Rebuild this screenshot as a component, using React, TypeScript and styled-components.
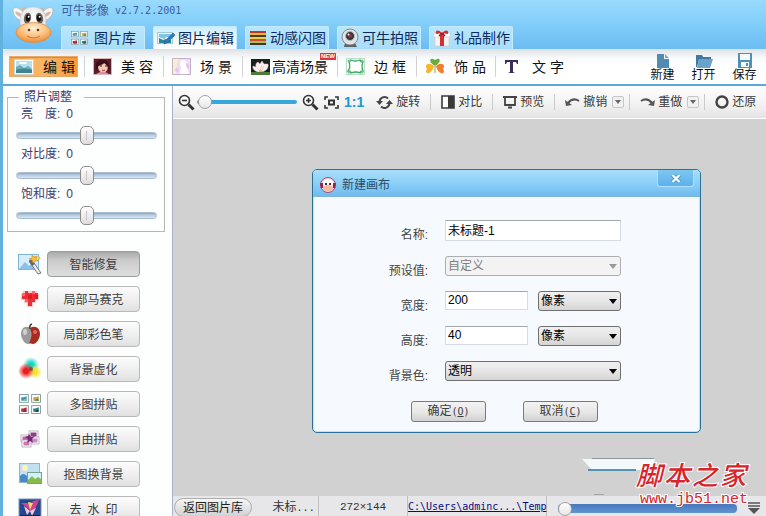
import React, { useState } from "react";
import styled, { createGlobalStyle, css } from "styled-components";

const cjk = `"Liberation Sans", "Noto Sans CJK SC", sans-serif`;
const mono = `"DejaVu Sans Mono", "Noto Sans CJK SC", monospace`;

const GlobalStyle = createGlobalStyle`
  * { box-sizing: border-box; }
  body { margin: 0; font: 12px/16px ${cjk}; color: #333; overflow: hidden; }
  button, input, select { font: inherit; color: inherit; margin: 0; }
`;

const Shell = styled.div`
  height: 100vh;
  display: flex;
  flex-direction: column;
  position: relative;
  overflow: hidden;
  border-left: 3px solid #62b1de;
`;

/* ---------- header ---------- */

const Header = styled.header`
  flex: none;
  height: 49px;
  display: flex;
  gap: 6px;
  padding-left: 9px;
  background: linear-gradient(#99dafd, #81cdf9 50%, #6abcf2);
`;

const Brand = styled.div`
  width: 43px;
  padding-top: 4px;
  flex: none;
`;

const HeaderMain = styled.div`
  flex: 1;
  display: flex;
  flex-direction: column;
  justify-content: space-between;
`;

const AppTitle = styled.h1`
  margin: 0;
  padding-top: 3px;
  font: 12px/16px ${cjk};
  color: #3f5ca0;
  display: flex;
  gap: 6px;
`;

const Latin = styled.span`
  font-family: ${mono};
  font-size: 10px;
`;

const Tabs = styled.nav`
  display: flex;
  gap: 8px;
`;

const Tab = styled.button<{ $active?: boolean }>`
  width: 84px;
  height: 23px;
  padding: 0 0 0 3px;
  display: flex;
  align-items: center;
  gap: 3px;
  border: 1px solid #c4eafc;
  border-bottom: 0;
  border-radius: 2px 2px 0 0;
  background: ${(p) =>
    p.$active ? "linear-gradient(#c9eefd, #f0faff 60%, #fff)" : "linear-gradient(#b9e6fd, #a8ddfa)"};
  font-size: 14px;
  white-space: nowrap;
  color: #0d2a5c;
`;

const TabIcon = styled.span<{ $wide?: boolean }>`
  width: ${(p) => (p.$wide ? 26 : 18)}px;
  padding-left: ${(p) => (p.$wide ? 6 : 0)}px;
  display: flex;
`;

/* ---------- ribbon ---------- */

const Ribbon = styled.div`
  flex: none;
  height: 37px;
  display: flex;
  justify-content: space-between;
  padding-left: 3px;
  background: linear-gradient(#dde0e4, #f8f9fa 25%, #fff 45%, #fff);
  border-bottom: 2px solid #5aa9da;
  border-radius: 3px 0 0 0;
`;

const RibbonItems = styled.div`
  display: flex;
  align-items: center;
`;

const RibbonSlot = styled.div<{ $wide?: boolean; $last?: boolean }>`
  width: ${(p) => (p.$wide ? 95 : 79)}px;
  height: 21px;
  padding: 0 6px 0 3px;
  position: relative;
  border-right: ${(p) => (p.$last ? "0" : "1px solid #d2d2d6")};
`;

const RibbonButton = styled.button<{ $active?: boolean; $tight?: boolean }>`
  width: 100%;
  height: 21px;
  padding: 0 0 0 5px;
  display: flex;
  align-items: center;
  gap: ${(p) => (p.$tight ? 2 : 9)}px;
  border: 0;
  background: none;
  font-size: 14px;
  white-space: nowrap;
  color: #111;
  ${(p) =>
    p.$active &&
    css`
      background: linear-gradient(90deg, #f8a94e, #fbb765 50%, #f49a38);
      box-shadow: inset 0 0 0 1px #e8a869, inset 0 2px 1px #c88a4c;
    `}
`;

const NewBadge = styled.span`
  position: absolute;
  top: -3px;
  right: 1px;
  padding: 0 1px;
  font: bold 6px/7px ${cjk};
  color: #fff;
  background: #d9373f;
`;

const FileActions = styled.div`
  display: flex;
  padding: 4px 1px 0 0;
`;

const FileAction = styled.button`
  width: 41px;
  padding: 0;
  border: 0;
  background: none;
  display: flex;
  flex-direction: column;
  align-items: center;
  line-height: 14px;
  color: #111;
`;

/* ---------- body ---------- */

const Body = styled.div`
  flex: 1;
  min-height: 0;
  display: flex;
`;

const Sidebar = styled.aside`
  flex: none;
  width: 170px;
  overflow: hidden;
  border-right: 1px solid #a9afc4;
  background: #fdfefe;
`;

const AdjustGroup = styled.fieldset`
  margin: 3px 7px 0 4px;
  padding: 1px 7px 5px 8px;
  border: 1px solid #b3b9b0;
  color: #3c3c6e;
`;

const Legend = styled.legend`
  margin-left: 3px;
  padding: 0 12px 0 5px;
  line-height: 16px;
`;

const Adjust = styled.label`
  display: block;
  height: 40px;
`;

const AdjustName = styled.span`
  display: flex;
  gap: 6px;
  padding-left: 5px;
  line-height: 16px;
`;

const AdjustRange = styled.input`
  appearance: none;
  display: block;
  width: 100%;
  height: 20px;
  margin: 3px 0 0;
  background: none;
  &::-webkit-slider-runnable-track {
    height: 7px;
    border: 1px solid #a9bccd;
    border-radius: 4px;
    background: linear-gradient(#93a9bf, #bccfe4 50%, #d6e4f4);
  }
  &::-webkit-slider-thumb {
    appearance: none;
    width: 14px;
    height: 19px;
    margin-top: -7px;
    border: 1px solid #8c8c8c;
    border-radius: 5px;
    background: linear-gradient(90deg, transparent 5px, #c3c3c3 5px, #c3c3c3 6px, transparent 6px) center / 12px 9px
        no-repeat,
      linear-gradient(#fff, #dcdcdc);
  }
`;

const ToolList = styled.ul`
  list-style: none;
  margin: 19px 0 0;
  padding: 0 0 0 15px;
  display: flex;
  flex-direction: column;
  gap: 9px;
`;

const ToolRow = styled.li`
  display: flex;
  align-items: center;
  gap: 5px;
`;

const ToolIcon = styled.span`
  width: 24px;
  height: 26px;
  display: grid;
  place-items: center;
  flex: none;
`;

const ToolButton = styled.button<{ $active?: boolean }>`
  width: 93px;
  height: 26px;
  padding: 2px 0 0;
  border: 1px solid #b9b9b9;
  border-radius: 4px;
  color: #3d3d3d;
  background: linear-gradient(#fcfcfc, #ededed 60%, #e0e0e0);
  ${(p) =>
    p.$active &&
    css`
      border-color: #9c9c9c;
      background: linear-gradient(#a9a9a9, #cbcbcb 35%, #dedede);
    `}
`;

const Workspace = styled.main`
  flex: 1;
  min-width: 0;
  display: flex;
  flex-direction: column;
`;

const CanvasBar = styled.div`
  flex: none;
  height: 33px;
  display: flex;
  align-items: center;
  gap: 10px;
  padding: 0 5px;
  border-bottom: 1px solid #fff;
  box-shadow: 0 1px 0 #bfbfbf;
  background: linear-gradient(#fdfdfd, #f4f4f4 50%, #e4e4e4);
`;

const ZoomGroup = styled.div`
  display: flex;
  align-items: center;
  margin-right: 2px;
`;

const PlainButton = styled.button`
  padding: 0;
  border: 0;
  background: none;
  display: flex;
  align-items: center;
  gap: 3px;
  white-space: nowrap;
  color: #3a3a3a;
`;

const FitButton = styled(PlainButton)`
  margin: 0 5px;
`;

const ActualSize = styled(PlainButton)`
  font-weight: bold;
  font-size: 14px;
  color: #2196d2;
`;

const Divider = styled.span`
  width: 1px;
  height: 16px;
  background: #cacaca;
`;

const SplitTool = styled.div`
  display: flex;
  align-items: center;
  gap: 5px;
  margin-right: -5px;
`;

const DropButton = styled.button`
  width: 12px;
  height: 12px;
  padding: 0;
  display: grid;
  place-items: center;
  border: 1px solid #c6c6c6;
  border-radius: 2px;
  background: #f1f1f1;
`;

const LineRange = styled.input<{ $thick?: boolean }>`
  appearance: none;
  width: ${(p) => (p.$thick ? 179 : 100)}px;
  height: 16px;
  margin: 0 ${(p) => (p.$thick ? 0 : 5)}px 0 ${(p) => (p.$thick ? 0 : 2)}px;
  background: none;
  &::-webkit-slider-runnable-track {
    height: ${(p) => (p.$thick ? 9 : 4)}px;
    border-radius: 4px;
    background: ${(p) => (p.$thick ? "linear-gradient(#4a78bb, #5f94d4)" : "#38a8dc")};
  }
  &::-webkit-slider-thumb {
    appearance: none;
    width: 14px;
    height: 14px;
    margin-top: ${(p) => (p.$thick ? -2 : -5)}px;
    border: 1px solid #a2a2a2;
    border-radius: 50%;
    background: linear-gradient(#fff, #e6e6e6);
  }
`;

const Canvas = styled.div`
  flex: 1;
  background: #d1d1d1;
`;

const StatusBar = styled.footer`
  flex: none;
  height: 20px;
  display: flex;
  align-items: stretch;
  background: #e7e7e9;
  padding-right: 6px;
`;

const BackButton = styled.button`
  width: 78px;
  height: 19px;
  margin: 2px 0 0 1px;
  padding: 0;
  border: 1px solid #adadad;
  border-radius: 10px;
  background: linear-gradient(#f6f6f6, #d2d2d2);
  line-height: 16px;
  color: #222;
`;

const StatusCell = styled.span<{ $w: number }>`
  width: ${(p) => p.$w}px;
  padding-top: 2px;
  line-height: 18px;
  border-right: 1px solid #bfbfc4;
  text-align: right;
  white-space: nowrap;
`;

const SizeCell = styled(StatusCell)`
  padding-top: 3px;
  text-align: center;
  font: 11px/16px "Liberation Mono", monospace;
  border-right-color: #b9bbdc;
`;

const PathLink = styled.a`
  padding-top: 3px;
  font: 10px/16px ${mono};
  color: #0a0a80;
  border-right: 1px solid #bfbfc4;
`;

const StatusZoom = styled.div`
  flex: 1;
  display: flex;
  align-items: center;
  justify-content: space-between;
  padding: 4px 0 0 11px;
`;

/* ---------- dialog ---------- */

const Dialog = styled.section`
  position: absolute;
  left: 309px;
  top: 169px;
  width: 389px;
  border: 1px solid #2a7197;
  border-radius: 5px;
  overflow: hidden;
  background: #f6fafe;
  box-shadow: inset 0 0 0 1px #aeeafa;
`;

const DialogTitle = styled.div`
  height: 27px;
  display: flex;
  align-items: center;
  padding: 4px 6px 0 7px;
  gap: 6px;
  background: linear-gradient(#a9def9, #8ccff8 50%, #6fbcf0);
  border-bottom: 1px solid #7fb4d8;
  color: #2c4a66;
`;

const DialogHeading = styled.h2`
  flex: 1;
  margin: 0;
  font: 12px/16px ${cjk};
`;

const CloseButton = styled.button`
  align-self: flex-start;
  width: 37px;
  height: 17px;
  margin-top: -4px;
  padding: 0;
  display: grid;
  place-items: center;
  border: 1px solid #aee0fb;
  border-top: 0;
  border-radius: 0 0 3px 3px;
  background: linear-gradient(#7cc6f1, #5cb2ec);
`;

const Form = styled.form`
  padding: 23px 79px 10px 0;
  display: flex;
  flex-direction: column;
  gap: 15px;
`;

const Field = styled.div`
  display: grid;
  grid-template-columns: 115px 1fr;
  column-gap: 17px;
`;

const FieldLabel = styled.label`
  padding-top: 7px;
  height: 20px;
  line-height: 16px;
  text-align: right;
  color: #444;
`;

const Controls = styled.div`
  display: grid;
  grid-auto-flow: column;
  grid-auto-columns: 1fr;
  gap: 10px;
  color: #000;
`;

const TextBox = styled.input<{ $tall?: boolean }>`
  width: 100%;
  height: ${(p) => (p.$tall ? 21 : 19)}px;
  padding: 0 2px 2px;
  border: 1px solid #d4dbe2;
  border-top-color: #a3a8af;
  background: #fff;
`;

const SelectWrap = styled.div`
  position: relative;
  display: grid;
  align-items: center;
  height: 20px;
`;

const Select = styled.select`
  appearance: none;
  width: 100%;
  height: 20px;
  padding: 0 16px 1px 2px;
  border: 1px solid #6f6f6f;
  border-radius: 3px;
  background: linear-gradient(#f0f0f0, #e6e6e6 50%, #d4d4d4);
  &:disabled {
    opacity: 1;
    color: #7e7e7e;
    border-color: #aaaeb2;
    background: #f3f3f3;
  }
`;

const Caret = styled.svg`
  position: absolute;
  right: 4px;
  pointer-events: none;
`;

const DialogActions = styled.div`
  display: flex;
  gap: 37px;
  padding: 5px 0 0 98px;
`;

const DialogButton = styled.button`
  width: 75px;
  height: 21px;
  padding: 0;
  border: 1px solid #7a7a7a;
  border-radius: 3px;
  background: linear-gradient(#f3f3f3, #e8e8e8 50%, #d2d2d2);
  color: #3c3c3c;
`;

/* ---------- site mark ---------- */

const GhostPanel = styled.svg`
  position: absolute;
  right: 66px;
  bottom: 16px;
`;

const SiteMark = styled.div`
  position: absolute;
  right: 18px;
  bottom: 8px;
  color: #d6262b;
  paint-order: stroke fill;
  -webkit-text-stroke: 2px #fff;
`;

const SiteName = styled.div`
  display: flex;
  gap: 2px;
  margin: 0 0 0 -4px;
  font: italic 500 26px/30px "Liberation Sans", "Noto Sans CJK SC", sans-serif;
`;

const SiteUrl = styled.div`
  font: 15px/17px "Liberation Mono", monospace;
`;

/* ---------- drawings ---------- */

const Cow = () => (
  <svg width="42" height="40" viewBox="0 0 42 40">
    <defs>
      <radialGradient id="muzzle" cx=".5" cy=".3" r=".7">
        <stop offset="0" stopColor="#fff0d8" />
        <stop offset=".5" stopColor="#fcc586" />
        <stop offset="1" stopColor="#ee8c33" />
      </radialGradient>
      <radialGradient id="face" cx=".5" cy=".4" r=".7">
        <stop offset="0" stopColor="#fff" />
        <stop offset="1" stopColor="#d9dcdf" />
      </radialGradient>
    </defs>
    <path d="M12 9C9 7 9 4 13 3c0 3 2 4 5 5zM30 9c3-2 3-5-1-6 0 3-2 4-5 5z" fill="#d9b48c" />
    <path d="M11 8C6 2 1 3 1 6c0 6 5 11 10 10zM31 8c5-6 10-5 10-2 0 6-5 11-10 10z" fill="#f6f6f6" stroke="#b5aaa5" strokeWidth=".7" />
    <path d="M9 10C6 7 3 8 3 8c1 3 4 5 7 5zM33 10c3-3 6-2 6-2-1 3-4 5-7 5z" fill="#dcb5aa" />
    <path d="M21 3c9 0 13 6 13 14 0 9-5 15-13 15S8 26 8 17C8 9 12 3 21 3z" fill="url(#face)" stroke="#c5c5c5" strokeWidth=".6" />
    <ellipse cx="15.500" cy="14" rx="3.500" ry="5.500" fill="#6e5f58" transform="rotate(12 15 14)" />
    <ellipse cx="27.500" cy="14" rx="3.500" ry="5.500" fill="#6e5f58" transform="rotate(-12 28 14)" />
    <ellipse cx="16" cy="14" rx="2.200" ry="3.500" fill="#111" />
    <ellipse cx="27" cy="14" rx="2.200" ry="3.500" fill="#111" />
    <circle cx="16.700" cy="12.800" r="1" fill="#fff" />
    <circle cx="27.700" cy="12.800" r="1" fill="#fff" />
    <ellipse cx="21.500" cy="28.500" rx="17.500" ry="10" fill="url(#muzzle)" stroke="#dc8637" strokeWidth=".7" />
    <circle cx="17" cy="26" r="1.300" fill="#6a3c16" />
    <circle cx="26" cy="26" r="1.300" fill="#6a3c16" />
    <path d="M15 32q7 4 13 0" fill="none" stroke="#b8682b" strokeWidth=".8" />
  </svg>
);

const Thumbs = ({ large }: { large?: boolean }) => (
  <svg width={large ? 22 : 17} height={large ? 20 : 14} viewBox="0 0 20 18" preserveAspectRatio="none">
    {[
      { x: 0, y: 0, a: "#3e9aa8", b: "#7fc5a0" },
      { x: 11, y: 0, a: "#c5a24a", b: "#4b7c54" },
      { x: 0, y: 10, a: "#b42e35", b: "#732a45" },
      { x: 11, y: 10, a: "#357b77", b: "#213a6e" },
    ].map((t) => (
      <g key={t.a} transform={`translate(${t.x} ${t.y})`}>
        <rect x=".5" y=".5" width="8" height="7" fill="#fff" stroke="#7d9595" strokeWidth=".8" />
        <path d="M2 6V3l2 0 3-1v4z" fill={t.a} />
        <path d="M3 6l3-2 1 2z" fill={t.b} />
      </g>
    ))}
  </svg>
);

const PhotoEdit = () => (
  <svg width="18" height="14" viewBox="0 0 18 14">
    <rect x=".5" y="1.500" width="15" height="11" fill="#eaf7ff" stroke="#a5c7d6" />
    <path d="M2 3h12v4l-4-1-3 2-5-2z" fill="#7cc7e8" />
    <path d="M2 7l4 2 3-1 5 1v3H2z" fill="#2c8590" />
    <path d="M7 13l1-3 8-8 2 2-8 8z" fill="#2f79c3" stroke="#174f8f" strokeWidth=".5" />
  </svg>
);

const Stripes = () => (
  <svg width="18" height="14" viewBox="0 0 18 14">
    {["#b33a2c", "#e3b53b", "#4f3a2a", "#e6d14a", "#cf4a38", "#a9c04c", "#42352c"].map((c, i) => (
      <rect key={c} x="1" y={i * 2} width="16" height="2" fill={c} />
    ))}
  </svg>
);

const Webcam = () => (
  <svg width="18" height="20" viewBox="0 0 18 20">
    <path d="M4 15h10l2 4H3z" fill="#5d6266" />
    <circle cx="9" cy="9" r="8" fill="#e2e4e6" stroke="#85898d" />
    <circle cx="9" cy="8" r="4.500" fill="#34383c" stroke="#b8bcc0" />
    <circle cx="9" cy="8" r="2" fill="#8f3540" />
    <circle cx="7.500" cy="6.500" r="1" fill="#fff" />
  </svg>
);

const Gift = () => (
  <svg width="18" height="18" viewBox="0 0 18 18">
    <path d="M2 7h14v10H2z" fill="#f7f4f2" stroke="#d7c6c2" strokeWidth=".6" />
    <path d="M1 4h16v4H1z" fill="#fff" stroke="#d9c5c2" strokeWidth=".6" />
    <path d="M7 4h4v13H7z" fill="#d22f2f" />
    <path d="M9 4C5 0 2 1 3 5zM9 4c4-4 7-3 6 1z" fill="#d22f2f" />
    <path d="M9 4L6 7M9 4l3 3" stroke="#a81a20" strokeWidth="1.500" />
  </svg>
);

const Landscape = () => (
  <svg width="20" height="16" viewBox="0 0 20 16">
    <rect x=".5" y=".5" width="19" height="15" fill="#fff" stroke="#cdd5cc" />
    <rect x="2" y="2" width="16" height="12" fill="#b5e0ee" />
    <path d="M2 8l4-2 4 3 4-2 4 3v3H2z" fill="#6fabb5" />
    <path d="M2 11q8-3 16 0v3H2z" fill="#3f8496" />
    <ellipse cx="9" cy="4" rx="4" ry="1" fill="#fff" />
  </svg>
);

const Portrait = () => (
  <svg width="19" height="17" viewBox="0 0 19 17">
    <rect x=".5" y=".5" width="18" height="16" fill="#5b1e2c" stroke="#d9b7b7" />
    <path d="M5 8c0-7 10-7 10 0 0 9-10 9-10 0z" fill="#f5c9b8" />
    <path d="M3 13C1 2 8 1 11 2c5 0 6 7 5 11-1-4-2-6-5-8-1 2-5 2-6 4z" fill="#3a1018" />
    <path d="M7 8h2M12 8h2" stroke="#321" />
    <path d="M9 12q1 1 3 0" stroke="#c42534" fill="none" />
    <path d="M3 16q7-5 13 0z" fill="#d990a0" />
  </svg>
);

const Scene = () => (
  <svg width="19" height="17" viewBox="0 0 19 17">
    <rect x=".5" y=".5" width="18" height="16" fill="#f0dcf4" stroke="#c4b3cb" />
    <path d="M1 1h6L4 9v7H1z" fill="#f7f0c8" />
    <path d="M11 2c4 0 6 4 4 7l2 7H8l1-7C7 6 8 2 11 2z" fill="#fff" />
    <path d="M14 4l3 3v5l-3-4z" fill="#e7c3ea" />
    <circle cx="5" cy="12" r="2" fill="#e8c6ef" />
  </svg>
);

const Lotus = () => (
  <svg width="19" height="16" viewBox="0 0 19 16">
    <rect width="19" height="16" fill="#17221a" />
    <path d="M9 13C3 13 1 9 2 7l3 1C4 5 6 3 7 3l2 2 2-3 2 3 4 0c1 4-2 8-8 8z" fill="#fbeff3" stroke="#d7a7bc" strokeWidth=".5" />
    <path d="M6 9l3 3 2-6M13 7l-3 6" stroke="#dcb6c4" strokeWidth=".6" fill="none" />
    <path d="M0 13h19v3H0z" fill="#4a7c3a" />
    <path d="M8 11h3v2H8z" fill="#e2c447" />
  </svg>
);

const Frame = () => (
  <svg width="19" height="17" viewBox="0 0 19 17">
    <rect x=".5" y=".5" width="18" height="16" fill="#fff" stroke="#b7dfc1" />
    <path d="M3 4q2-1 2-2 4 2 9 0 0 2 3 2-2 4 0 9-3 0-3 2-4-2-9 0 0-2-3-2 3-4 1-9z" fill="none" stroke="#3aa665" strokeWidth="1.300" />
    <g fill="#6cc28a">
      <circle cx="3" cy="3" r="1.500" />
      <circle cx="16" cy="3" r="1.500" />
      <circle cx="3" cy="14" r="1.500" />
      <circle cx="16" cy="14" r="1.500" />
    </g>
  </svg>
);

const Clover = () => (
  <svg width="20" height="17" viewBox="0 0 20 17">
    <path d="M10 8C4 5 4 0 8 1l2 1 2-1c4-1 4 4-2 7z" fill="#69ae3d" />
    <path d="M9 8C5 4 0 6 1 9l1 2-1 2c0 4 6 3 8-5z" fill="#f5b52e" />
    <path d="M11 8c4-4 9-2 8 1l-1 2 1 2c0 4-6 3-8-5z" fill="#f07f2b" />
    <path d="M10 8v7" stroke="#8ca637" />
  </svg>
);

const LetterT = () => (
  <svg width="19" height="15" viewBox="0 0 19 15">
    <path d="M1 1h13v4h-1l-1-2H9v10l2 1H4l2-1V3H3L2 5H1z" fill="#3b2b60" />
  </svg>
);

const NewFile = () => (
  <svg width="14" height="15" viewBox="0 0 14 15">
    <path d="M1 1h7v5h5v9H1z" fill="#4f8bb3" />
    <path d="M9 1l4 4H9z" fill="#76a9ca" />
  </svg>
);

const OpenFolder = () => (
  <svg width="18" height="15" viewBox="0 0 18 15">
    <path d="M1 2h6l1 2h8v3H4L2 14H1z" fill="#3f7aa4" />
    <path d="M4 6h14l-3 9H2z" fill="#6ba3c8" />
  </svg>
);

const Floppy = () => (
  <svg width="16" height="15" viewBox="0 0 16 15">
    <path d="M1 0h14v15H1z" fill="#4f8fb8" />
    <path d="M3 1h10v6H3zM4 9h8v5H4z" fill="#f4f9fb" />
    <path d="M9 10h2v3H9z" fill="#4f8fb8" />
  </svg>
);

const Magnifier = ({ plus }: { plus?: boolean }) => (
  <svg width="17" height="17" viewBox="0 0 17 17" fill="none" stroke="#333">
    <circle cx="6.500" cy="6.500" r="5" strokeWidth="1.600" fill="#fafafa" />
    <path d="M10.500 10.500l5 5" strokeWidth="3" />
    <path d={plus ? "M4 6.500h5M6.500 4v5" : "M4 6.500h5"} strokeWidth="1.600" />
  </svg>
);

const Fit = () => (
  <svg width="15" height="13" viewBox="0 0 15 13" fill="none" stroke="#333" strokeWidth="1.600">
    <path d="M1 4V1h3M11 1h3v3M14 9v3h-3M4 12H1V9" />
    <path d="M5 4.500h5v4H5z" strokeWidth="2" />
  </svg>
);

const Rotate = () => (
  <svg width="17" height="15" viewBox="0 0 17 15">
    <path d="M3.500 7A5 5 0 0 1 12 3.500M13.500 8A5 5 0 0 1 5 11.500" fill="none" stroke="#444" strokeWidth="2" />
    <path d="M0 6h7l-3.500 4zM17 9h-7l3.500-4z" fill="#444" />
  </svg>
);

const Contrast = () => (
  <svg width="14" height="14" viewBox="0 0 14 14">
    <path d="M1 1h12v12H1z" fill="#fff" stroke="#3a3a3a" strokeWidth="1.600" />
    <path d="M7 1h6v12H7z" fill="#3a3a3a" />
  </svg>
);

const Preview = () => (
  <svg width="14" height="14" viewBox="0 0 14 14" fill="none" stroke="#444" strokeWidth="1.800">
    <path d="M0 2h14M2 2v8h10V2M5 12.500h4" />
  </svg>
);

const Arc = ({ flip }: { flip?: boolean }) => (
  <svg width="15" height="10" viewBox="0 0 15 10">
    <g transform={flip ? "translate(15 0) scale(-1 1)" : undefined}>
      <path d="M3 6Q8 0 14 4" fill="none" stroke="#555" strokeWidth="2" />
      <path d="M0 3l1 6 6-1z" fill="#555" />
    </g>
  </svg>
);

const Ring = () => (
  <svg width="14" height="14" viewBox="0 0 14 14">
    <circle cx="7" cy="7" r="5.500" fill="none" stroke="#444" strokeWidth="2.400" />
  </svg>
);

const Down = () => (
  <svg width="6" height="4" viewBox="0 0 6 4">
    <path d="M0 0h6L3 4z" fill="#666" />
  </svg>
);

const Wand = () => (
  <svg width="24" height="22" viewBox="0 0 24 22">
    <rect x=".5" y="1.500" width="20" height="15" fill="#d7edfa" stroke="#7fb5d6" />
    <path d="M1 16l6-7 4 4 3-3 6 6z" fill="#8fc0e3" />
    <path d="M11 8l9 13 3-1-9-13z" fill="#eee" stroke="#555" strokeWidth=".8" />
    <path d="M11 8l3-1 3 4-3 2z" fill="#667" />
    <path d="M14 2l2 2 3-1-1 3 2 2-3 0-2 2-1-3-3-1 3-1z" fill="#f6c02e" stroke="#c78b1c" strokeWidth=".6" />
    <circle cx="21" cy="5" r="1.500" fill="#f6c02e" />
  </svg>
);

const PixelHeart = () => (
  <svg width="24" height="22" viewBox="0 0 24 22">
    <path d="M5 3h14v3h2v6h-3v3h-3v4h-6v-4H6v-3H3V6h2z" fill="#f9c9c9" />
    <path d="M4 5h3V3h3v2h4V3h3v2h3v6h-3v3h-3v4h-4v-4H7v-3H4z" fill="#ee2c31" />
    <path d="M4 5h3v3H4zM14 3h3v3h-3zM7 11h3v3H7z" fill="#f4696d" />
    <path d="M10 7h4v4h-4zM17 7h3v4h-3z" fill="#d5202a" />
  </svg>
);

const Apple = () => (
  <svg width="24" height="22" viewBox="0 0 24 22">
    <path d="M13 5C7 2 3 5 3 11c0 5 4 10 7 10l4-1z" fill="#9b9b9b" />
    <path d="M12 5c5-3 10 0 10 6 0 5-4 10-7 10l-4-1c3-5 3-10 1-15z" fill="#a92a20" />
    <path d="M12 6q-1-4 2-5" stroke="#4a3a2a" strokeWidth="1.500" fill="none" />
    <ellipse cx="7" cy="9" rx="2" ry="3" fill="#d2d2d2" />
    <ellipse cx="17" cy="9" rx="2" ry="2" fill="#e0685a" />
  </svg>
);

const ColorBlur = () => (
  <svg width="24" height="24" viewBox="0 0 24 24">
    <defs>
      {[
        ["bc", "#19d6c4"],
        ["br", "#ee1c1c"],
        ["by", "#f4e52a"],
      ].map(([id, c]) => (
        <radialGradient id={id} key={id}>
          <stop offset=".3" stopColor={c} />
          <stop offset="1" stopColor={c} stopOpacity="0" />
        </radialGradient>
      ))}
    </defs>
    <circle cx="13" cy="8" r="8" fill="url(#bc)" />
    <circle cx="17" cy="15" r="7" fill="url(#by)" />
    <circle cx="8" cy="14" r="8" fill="url(#br)" />
    <circle cx="13" cy="12" r="2" fill="#443a22" fillOpacity=".6" />
  </svg>
);

const FreeCollage = () => (
  <svg width="24" height="20" viewBox="0 0 24 20">
    {[
      { x: 3, y: 6, c: "#b768ad" },
      { x: 11, y: 2, c: "#8f3f86" },
      { x: 12, y: 8, c: "#c68acb" },
      { x: 4, y: 11, c: "#cf78ab" },
    ].map((t) => (
      <g key={t.c} transform={`translate(${t.x} ${t.y})`}>
        <rect width="9" height="7" fill="#fff" stroke="#a996ac" strokeWidth=".7" />
        <path d="M1.500 1.500h6v4h-6z" fill={t.c} />
      </g>
    ))}
    <path d="M11 5l2 3 4-1-3 3 1 4-3-2-3 2 1-4-3-2 3-1z" fill="#7a2a72" />
  </svg>
);

const Cutout = () => (
  <svg width="24" height="22" viewBox="0 0 24 22">
    <rect x="1.500" y=".5" width="20" height="19" fill="#c3dff0" stroke="#92b5cd" />
    <circle cx="7" cy="5" r="3" fill="#fdf3bd" />
    <path d="M2 19v-6q3-4 7 0v6z" fill="#4a8ac9" />
    <rect x="9.500" y="9.500" width="14" height="11" fill="#d5f0fb" stroke="#6fa68e" />
    <path d="M10 17l4-4 3 3 3-2 3 2v4H10z" fill="#83bc4a" />
  </svg>
);

const Butterfly = () => (
  <svg width="24" height="22" viewBox="0 0 24 22">
    <rect x="1" y="1" width="22" height="20" fill="#24488f" stroke="#7893b8" />
    <path d="M12 12L3 5l8 0 1 5 3-7 6-1-4 9-5 3z" fill="#d23f94" />
    <path d="M12 13L6 8l3 9zM12 13l6-3-4 8z" fill="#f2c8dc" />
    <path d="M10 4l2 8 3-7z" fill="#f2dc62" />
    <path d="M2 17h20v4H2z" fill="#1b1f4d" />
  </svg>
);

/* ---------- data ---------- */

const tabs = [
  { label: "图片库", icon: <Thumbs />, wide: true },
  { label: "图片编辑", icon: <PhotoEdit />, active: true },
  { label: "动感闪图", icon: <Stripes /> },
  { label: "可牛拍照", icon: <Webcam /> },
  { label: "礼品制作", icon: <Gift /> },
];

const ribbon = [
  { label: "编 辑", icon: <Landscape />, active: true },
  { label: "美 容", icon: <Portrait /> },
  { label: "场 景", icon: <Scene /> },
  { label: "高清场景", icon: <Lotus />, wide: true },
  { label: "边 框", icon: <Frame /> },
  { label: "饰 品", icon: <Clover /> },
  { label: "文 字", icon: <LetterT />, last: true },
];

const tools = [
  { label: "智能修复", icon: <Wand />, active: true },
  { label: "局部马赛克", icon: <PixelHeart /> },
  { label: "局部彩色笔", icon: <Apple /> },
  { label: "背景虚化", icon: <ColorBlur /> },
  { label: "多图拼贴", icon: <Thumbs large /> },
  { label: "自由拼贴", icon: <FreeCollage /> },
  { label: "抠图换背景", icon: <Cutout /> },
  { label: "去\u2002水\u2002印", icon: <Butterfly /> },
];

function Adjustment({ name }: { name: string }) {
  const [value, setValue] = useState(0);
  return (
    <Adjust>
      <AdjustName>
        <span>{name}:</span>
        <span>{value}</span>
      </AdjustName>
      <AdjustRange type="range" min={-100} max={100} value={value} onChange={(e) => setValue(Number(e.target.value))} />
    </Adjust>
  );
}

function Dropdown({ id, value, disabled, label }: { id?: string; value: string; disabled?: boolean; label?: string }) {
  return (
    <SelectWrap>
      <Select id={id} aria-label={label} disabled={disabled} defaultValue={value}>
        <option>{value}</option>
      </Select>
      <Caret width="8" height="5" viewBox="0 0 8 5">
        <path d="M0 0h8L4 5z" fill={disabled ? "#999" : "#000"} />
      </Caret>
    </SelectWrap>
  );
}

function NewCanvasDialog() {
  return (
    <Dialog role="dialog" aria-labelledby="dialog-title">
      <DialogTitle>
        <svg width="16" height="16" viewBox="0 0 16 16">
          <circle cx="8" cy="8" r="7.500" fill="#f3d5dd" stroke="#a04c72" />
          <path d="M0 6h3v5H1zM16 6h-3v5h2z" fill="#8f2750" />
          <path d="M3 6q1-4 5-4t5 4l-2 4H5z" fill="#fff" />
          <path d="M5 6h2v2H5zM9 6h2v2H9z" fill="#402638" />
          <ellipse cx="8" cy="11" rx="5" ry="3" fill="#f3b79c" />
        </svg>
        <DialogHeading id="dialog-title">新建画布</DialogHeading>
        <CloseButton aria-label="关闭">
          <svg width="10" height="9" viewBox="0 0 10 9">
            <path d="M1.500 1l7 7M8.500 1l-7 7" stroke="#2e82b8" strokeWidth="3.500" />
            <path d="M1.500 1l7 7M8.500 1l-7 7" stroke="#fff" strokeWidth="2.400" />
          </svg>
        </CloseButton>
      </DialogTitle>
      <Form onSubmit={(e) => e.preventDefault()}>
        <Field>
          <FieldLabel htmlFor="name">名称:</FieldLabel>
          <Controls>
            <TextBox id="name" $tall defaultValue="未标题-1" />
          </Controls>
        </Field>
        <Field>
          <FieldLabel htmlFor="preset">预设值:</FieldLabel>
          <Controls>
            <Dropdown id="preset" value="自定义" disabled />
          </Controls>
        </Field>
        <Field>
          <FieldLabel htmlFor="width">宽度:</FieldLabel>
          <Controls>
            <TextBox id="width" defaultValue="200" />
            <Dropdown value="像素" label="宽度单位" />
          </Controls>
        </Field>
        <Field>
          <FieldLabel htmlFor="height">高度:</FieldLabel>
          <Controls>
            <TextBox id="height" defaultValue="40" />
            <Dropdown value="像素" label="高度单位" />
          </Controls>
        </Field>
        <Field>
          <FieldLabel htmlFor="background">背景色:</FieldLabel>
          <Controls>
            <Dropdown id="background" value="透明" />
          </Controls>
        </Field>
        <DialogActions>
          <DialogButton>
            确定
            <Latin>
              (<u>O</u>)
            </Latin>
          </DialogButton>
          <DialogButton type="button">
            取消
            <Latin>
              (<u>C</u>)
            </Latin>
          </DialogButton>
        </DialogActions>
      </Form>
    </Dialog>
  );
}

export default function App() {
  return (
    <>
      <GlobalStyle />
      <Shell>
        <Header>
          <Brand>
            <Cow />
          </Brand>
          <HeaderMain>
            <AppTitle>
              可牛影像 <Latin>v2.7.2.2001</Latin>
            </AppTitle>
            <Tabs>
              {tabs.map((t) => (
                <Tab key={t.label} $active={t.active}>
                  <TabIcon $wide={t.wide}>{t.icon}</TabIcon>
                  {t.label}
                </Tab>
              ))}
            </Tabs>
          </HeaderMain>
        </Header>
        <Ribbon>
          <RibbonItems>
            {ribbon.map((r) => (
              <RibbonSlot key={r.label} $wide={r.wide} $last={r.last}>
                <RibbonButton $active={r.active} $tight={r.wide}>
                  {r.icon}
                  {r.label}
                </RibbonButton>
                {r.wide && <NewBadge>NEW</NewBadge>}
              </RibbonSlot>
            ))}
          </RibbonItems>
          <FileActions>
            <FileAction>
              <NewFile />
              新建
            </FileAction>
            <FileAction>
              <OpenFolder />
              打开
            </FileAction>
            <FileAction>
              <Floppy />
              保存
            </FileAction>
          </FileActions>
        </Ribbon>
        <Body>
          <Sidebar>
            <AdjustGroup>
              <Legend>照片调整</Legend>
              <Adjustment name={"亮\u3000度"} />
              <Adjustment name="对比度" />
              <Adjustment name="饱和度" />
            </AdjustGroup>
            <ToolList>
              {tools.map((t) => (
                <ToolRow key={t.label}>
                  <ToolIcon>{t.icon}</ToolIcon>
                  <ToolButton $active={t.active}>{t.label}</ToolButton>
                </ToolRow>
              ))}
            </ToolList>
          </Sidebar>
          <Workspace>
            <CanvasBar>
              <ZoomGroup>
                <PlainButton aria-label="缩小">
                  <Magnifier />
                </PlainButton>
                <LineRange type="range" aria-label="缩放" defaultValue={1} />
                <PlainButton aria-label="放大">
                  <Magnifier plus />
                </PlainButton>
                <FitButton aria-label="适应窗口">
                  <Fit />
                </FitButton>
                <ActualSize>1:1</ActualSize>
              </ZoomGroup>
              <PlainButton>
                <Rotate />
                旋转
              </PlainButton>
              <Divider />
              <PlainButton>
                <Contrast />
                对比
              </PlainButton>
              <Divider />
              <PlainButton>
                <Preview />
                预览
              </PlainButton>
              <Divider />
              <SplitTool>
                <PlainButton>
                  <Arc />
                  撤销
                </PlainButton>
                <DropButton aria-label="撤销记录">
                  <Down />
                </DropButton>
              </SplitTool>
              <Divider />
              <SplitTool>
                <PlainButton>
                  <Arc flip />
                  重做
                </PlainButton>
                <DropButton aria-label="重做记录">
                  <Down />
                </DropButton>
              </SplitTool>
              <Divider />
              <PlainButton>
                <Ring />
                还原
              </PlainButton>
            </CanvasBar>
            <Canvas />
            <StatusBar>
              <BackButton>返回图片库</BackButton>
              <StatusCell $w={67}>
                未标<Latin>...</Latin>&nbsp;
              </StatusCell>
              <SizeCell $w={89}>272×144</SizeCell>
              <PathLink href="#path">C:\Users\adminc...\Temp</PathLink>
              <StatusZoom>
                <LineRange $thick type="range" aria-label="画布缩放" defaultValue={0} />
                <svg width="12" height="13" viewBox="0 0 12 13">
                  <path d="M0 1h12M0 4h12" stroke="#555" strokeWidth="1.500" />
                  <path d="M0 6h12l-6 6z" fill="#555" />
                </svg>
              </StatusZoom>
            </StatusBar>
          </Workspace>
        </Body>
        <NewCanvasDialog />
        <GhostPanel width="240" height="56" viewBox="0 0 240 56">
          <path d="M0 0h240v2H0z" fill="#dccbd4" />
          <path d="M122 15h73l-3 11h-60z" fill="#f3f8fb" />
          <path d="M132 14.500h62" stroke="#8b959d" />
          <path d="M128 26h48" stroke="#2679a2" strokeWidth="1.500" />
          <path d="M134 50.500h10" stroke="#a5a5a5" />
        </GhostPanel>
        <SiteMark>
          <SiteName>
            <span>脚</span>
            <span>本</span>
            <span>之</span>
            <span>家</span>
          </SiteName>
          <SiteUrl>www.jb51.net</SiteUrl>
        </SiteMark>
      </Shell>
    </>
  );
}
